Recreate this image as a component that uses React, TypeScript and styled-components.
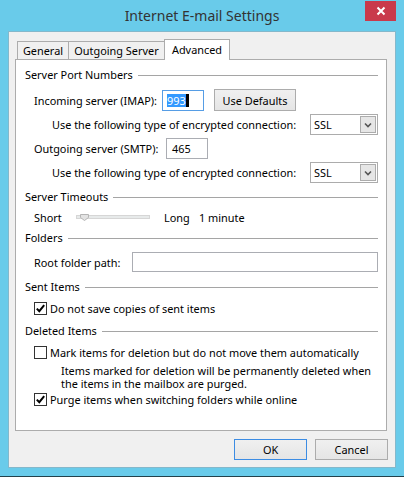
import React from 'react';
import styled, { createGlobalStyle } from 'styled-components';

const FONT = `"Noto Sans", "Open Sans", sans-serif`;

const Global = createGlobalStyle`
  html, body { margin: 0; padding: 0; background: #fff; }
  body { font-family: ${FONT}; }
  * { box-sizing: border-box; }
`;

const Window = styled.div`
  width: 404px;
  height: 477px;
  background: #69cbea;
  border-bottom: 1px solid #22414b;
  display: flex;
  flex-direction: column;
  font-family: ${FONT};
  font-size: 10.9px;
  color: #000;
`;

const TitleBar = styled.div`
  position: relative;
  height: 31px;
  flex: none;
  display: flex;
  align-items: center;
  justify-content: center;
  font-size: 14px;
  color: #333;
  padding-bottom: 1px;
`;

const CloseButton = styled.div`
  position: absolute;
  top: 1px;
  right: 8px;
  width: 31px;
  height: 20px;
  background: #c9394b;
  display: flex;
  align-items: center;
  justify-content: center;
`;

const Client = styled.div`
  flex: 1;
  margin: 0 8px 8px 8px;
  border: 1px solid #84b8cb;
  background: #f0f0f0;
  display: flex;
  flex-direction: column;
  padding: 7px 8px 0 6px;
`;

const TabStrip = styled.div`
  height: 21px;
  flex: none;
  display: flex;
  align-items: flex-end;
  padding-left: 2px;
  margin-bottom: -1px;
  position: relative;
  z-index: 1;
`;

const Tab = styled.div<{ $active?: boolean; $w: number; $edge?: 'left' | 'none' }>`
  width: ${(p) => p.$w}px;
  height: ${(p) => (p.$active ? 21 : 19)}px;
  display: flex;
  align-items: center;
  justify-content: center;
  background: ${(p) => (p.$active ? '#fff' : '#f0f0f0')};
  border: 1px solid #acacac;
  border-bottom: ${(p) => (p.$active ? 'none' : '1px solid #acacac')};
  ${(p) => (p.$edge === 'none' ? 'border-left: none; border-right: none;' : '')}
  padding-bottom: ${(p) => (p.$active ? 2 : 0)}px;
`;

const Panel = styled.div`
  flex: 1;
  background: #fff;
  border: 1px solid #acacac;
  padding: 8px 8px 0 9px;
  display: flex;
  flex-direction: column;
`;

const GroupHeader = styled.div<{ $mt: number }>`
  margin-top: ${(p) => p.$mt}px;
  height: 14px;
  line-height: 14px;
  display: flex;
  align-items: center;
  gap: 5px;
  &::after {
    content: '';
    flex: 1;
    height: 1px;
    background: #a5a5a5;
  }
`;

const Row = styled.div<{ $mt: number; $indent: number; $h?: number }>`
  margin-top: ${(p) => p.$mt}px;
  padding-left: ${(p) => p.$indent}px;
  height: ${(p) => p.$h ?? 14}px;
  display: flex;
  align-items: center;
`;

const SpreadRow = styled(Row)`
  justify-content: space-between;
`;

const Label = styled.span<{ $w?: number }>`
  white-space: nowrap;
  ${(p) => (p.$w ? `width: ${p.$w}px; flex: none;` : '')}
`;

const TextBox = styled.div<{ $w: number; $focus?: boolean; $h?: number }>`
  width: ${(p) => p.$w}px;
  height: ${(p) => p.$h ?? 21}px;
  border: 1px solid ${(p) => (p.$focus ? '#569de5' : '#abadb3')};
  background: #fff;
  display: flex;
  align-items: center;
  padding-left: 4px;
`;

const Selected = styled.span`
  background: #3399ff;
  color: #fff;
  line-height: 13px;
`;

const Caret = styled.span`
  display: inline-block;
  width: 3px;
  height: 13px;
  background: #000;
`;

const Button = styled.div<{ $w: number; $default?: boolean; $h?: number; $ml?: number }>`
  width: ${(p) => p.$w}px;
  height: ${(p) => p.$h ?? 21}px;
  margin-left: ${(p) => p.$ml ?? 0}px;
  border: 1px solid ${(p) => (p.$default ? '#3c8ce3' : '#acacac')};
  background: linear-gradient(#f0f0f0, #e5e5e5);
  display: flex;
  align-items: center;
  justify-content: center;
  flex: none;
`;

const Select = styled.div`
  width: 68px;
  height: 21px;
  border: 1px solid #acacac;
  background: #fff;
  display: flex;
  align-items: center;
  justify-content: space-between;
  padding: 0 1px 0 3px;
`;

const DropButton = styled.div`
  width: 16px;
  height: 17px;
  border: 1px solid #acacac;
  background: #e6e6e6;
  display: flex;
  align-items: center;
  justify-content: center;
`;

const SliderTrack = styled.div`
  position: relative;
  width: 74px;
  height: 4px;
  margin: 0 14px 0 14px;
  background: #e7eaea;
  border: 1px solid #d6d6d6;
  flex: none;
`;

const Thumb = styled.svg`
  position: absolute;
  left: 3px;
  top: -2px;
`;

const Gap = styled.span<{ $w: number }>`
  display: inline-block;
  width: ${(p) => p.$w}px;
  flex: none;
`;

const Box = styled.div`
  width: 13px;
  height: 13px;
  border: 1px solid #333;
  background: #fff;
  flex: none;
  margin-right: 3px;
  display: flex;
  align-items: center;
  justify-content: center;
`;

const Description = styled.div<{ $mt: number }>`
  margin-top: ${(p) => p.$mt}px;
  padding-left: 36px;
  line-height: 13px;
  white-space: nowrap;
`;

const ButtonRow = styled.div`
  flex: none;
  display: flex;
  justify-content: flex-end;
  gap: 8px;
  padding: 8px 0 7px;
  margin-right: -1px;
`;

const Check = ({ checked }: { checked: boolean }) => (
  <Box>
    {checked && (
      <svg width="11" height="11" viewBox="0 0 11 11">
        <path d="M1.8 5.6 L4.3 8.2 L9.2 2.2" fill="none" stroke="#000" strokeWidth="2" />
      </svg>
    )}
  </Box>
);

const Chevron = () => (
  <svg width="8" height="6" viewBox="0 0 8 6">
    <path d="M1 1.5 L4 4.5 L7 1.5" fill="none" stroke="#555" strokeWidth="1.6" />
  </svg>
);

const EncRow = ({ mt }: { mt: number }) => (
  <SpreadRow $mt={mt} $indent={27} $h={21}>
    <Label>Use the following type of encrypted connection:</Label>
    <Select>
      <span>SSL</span>
      <DropButton>
        <Chevron />
      </DropButton>
    </Select>
  </SpreadRow>
);

export default function App() {
  return (
    <>
      <Global />
      <Window>
        <TitleBar>
          Internet E-mail Settings
          <CloseButton>
            <svg width="10" height="10" viewBox="0 0 10 10">
              <path d="M1.5 1.5 L8.5 8.5 M8.5 1.5 L1.5 8.5" stroke="#fff" strokeWidth="2" />
            </svg>
          </CloseButton>
        </TitleBar>
        <Client>
          <TabStrip>
            <Tab $w={52}>General</Tab>
            <Tab $w={95} $edge="none">Outgoing Server</Tab>
            <Tab $w={66} $active>Advanced</Tab>
          </TabStrip>
          <Panel>
            <GroupHeader $mt={0}>Server Port Numbers</GroupHeader>
            <Row $mt={7} $indent={9} $h={22}>
              <Label $w={128}>Incoming server (IMAP):</Label>
              <TextBox $w={42} $focus>
                <Selected>993</Selected>
                <Caret />
              </TextBox>
              <Button $w={82} $h={22} $ml={10}>Use Defaults</Button>
            </Row>
            <EncRow mt={3} />
            <Row $mt={3} $indent={9} $h={21}>
              <Label $w={132}>Outgoing server (SMTP):</Label>
              <TextBox $w={42}>
                <Gap $w={1} />
                465
              </TextBox>
            </Row>
            <EncRow mt={3} />

            <GroupHeader $mt={7}>Server Timeouts</GroupHeader>
            <Row $mt={6} $indent={9}>
              <Label $w={28}>Short</Label>
              <SliderTrack>
                <Thumb width="9" height="7" viewBox="0 0 9 7">
                  <path d="M0.5 0.5 H8.5 V3.5 L4.5 6.5 L0.5 3.5 Z" fill="#e3e3e3" stroke="#b5b5b5" />
                </Thumb>
              </SliderTrack>
              <Label $w={35}>Long</Label>
              <Label>1 minute</Label>
            </Row>

            <GroupHeader $mt={7}>Folders</GroupHeader>
            <Row $mt={7} $indent={9} $h={20}>
              <Label $w={98}>Root folder path:</Label>
              <TextBox $w={247} $h={20} />
            </Row>

            <GroupHeader $mt={8}>Sent Items</GroupHeader>
            <Row $mt={7} $indent={9}>
              <Check checked />
              <Label>Do not save copies of sent items</Label>
            </Row>

            <GroupHeader $mt={9}>Deleted Items</GroupHeader>
            <Row $mt={7} $indent={9}>
              <Check checked={false} />
              <Label>Mark items for deletion but do not move them automatically</Label>
            </Row>
            <Description $mt={5}>
              Items marked for deletion will be permanently deleted when
              <br />
              the items in the mailbox are purged.
            </Description>
            <Row $mt={2} $indent={9}>
              <Check checked />
              <Label>Purge items when switching folders while online</Label>
            </Row>
          </Panel>
          <ButtonRow>
            <Button $w={73} $default>OK</Button>
            <Button $w={73}>Cancel</Button>
          </ButtonRow>
        </Client>
      </Window>
    </>
  );
}
